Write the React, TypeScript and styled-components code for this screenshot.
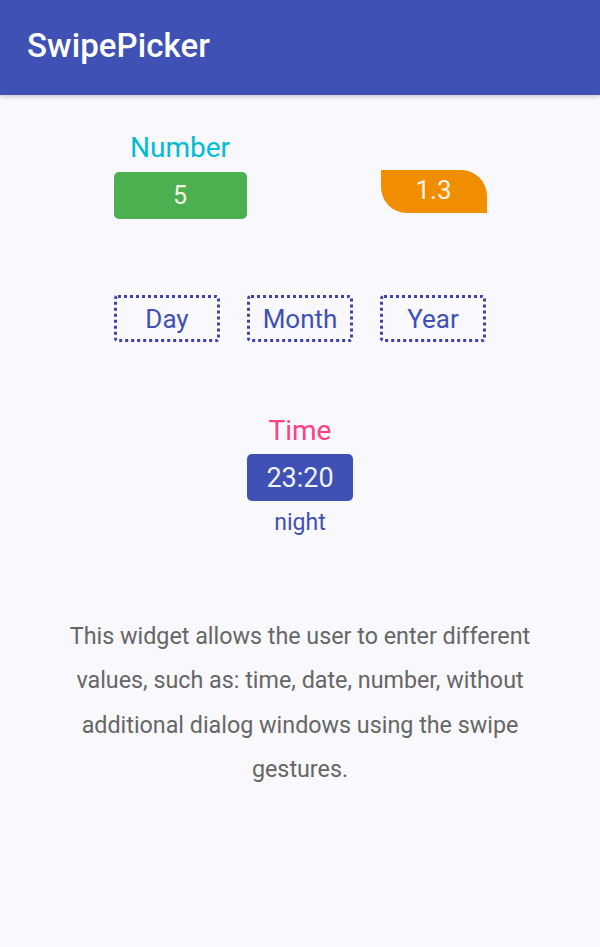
import React from "react";
import styled, { createGlobalStyle } from "styled-components";

const Global = createGlobalStyle`
  html, body { margin: 0; padding: 0; background: #f9f8fd; }
  body { font-family: Roboto, "Noto Sans", sans-serif; }
`;

const Page = styled.div`
  width: 600px;
  min-height: 947px;
  background: #f9f8fd;
  display: flex;
  flex-direction: column;
`;

const AppBar = styled.header`
  height: 95px;
  background: #3f51b5;
  display: flex;
  align-items: center;
  padding: 0 0 4px 27px;
  box-sizing: border-box;
  box-shadow: 0 2px 4px rgba(0, 0, 0, 0.18);
`;

const Title = styled.h1`
  margin: 0;
  color: #fff;
  font-size: 33px;
  font-weight: 500;
  letter-spacing: 0.1px;
`;

const Content = styled.main`
  display: flex;
  flex-direction: column;
  align-items: center;
`;

const TopRow = styled.div`
  width: 373px;
  margin-top: 38px;
  display: flex;
  justify-content: space-between;
  align-items: flex-start;
`;

const Field = styled.div`
  display: flex;
  flex-direction: column;
  align-items: center;
`;

const Label = styled.div<{ $color: string }>`
  color: ${(p) => p.$color};
  font-size: 28px;
  line-height: 30px;
  margin-bottom: 9px;
`;

const GreenBox = styled.div`
  width: 133px;
  height: 47px;
  background: #4caf50;
  border-radius: 5px;
  color: #f4f4e8;
  font-size: 25px;
  display: flex;
  align-items: center;
  justify-content: center;
`;

const OrangeBox = styled.div`
  width: 106px;
  height: 43px;
  margin-top: 37px;
  background: #f08e00;
  border-radius: 0 26px 0 26px;
  color: #fbf2e4;
  font-size: 26px;
  display: flex;
  align-items: center;
  justify-content: center;
  padding-bottom: 4px;
  box-sizing: border-box;
`;

const DateRow = styled.div`
  margin-top: 76px;
  display: flex;
  gap: 27px;
`;

const DottedBox = styled.div`
  width: 106px;
  height: 47px;
  box-sizing: border-box;
  border: 3px dotted #3f42a8;
  border-radius: 4px;
  color: #3f51b5;
  font-size: 26px;
  display: flex;
  align-items: center;
  justify-content: center;
`;

const TimeField = styled(Field)`
  margin-top: 74px;
`;

const TimeBox = styled.div`
  width: 106px;
  height: 47px;
  background: #3f51b5;
  border-radius: 5px;
  color: #f0f0f8;
  font-size: 27px;
  display: flex;
  align-items: center;
  justify-content: center;
  margin-top: -1px;
`;

const Sub = styled.div`
  color: #3f51b5;
  font-size: 23px;
  margin-top: 8px;
`;

const Description = styled.p`
  margin: 78px 0 0;
  width: 490px;
  text-align: center;
  color: #666;
  font-size: 23.3px;
  line-height: 44.4px;
`;

export default function App() {
  return (
    <Page>
      <Global />
      <AppBar>
        <Title>SwipePicker</Title>
      </AppBar>
      <Content>
        <TopRow>
          <Field>
            <Label $color="#00bcd4">Number</Label>
            <GreenBox>5</GreenBox>
          </Field>
          <OrangeBox>1.3</OrangeBox>
        </TopRow>
        <DateRow>
          <DottedBox>Day</DottedBox>
          <DottedBox>Month</DottedBox>
          <DottedBox>Year</DottedBox>
        </DateRow>
        <TimeField>
          <Label $color="#ff4081">Time</Label>
          <TimeBox>23:20</TimeBox>
          <Sub>night</Sub>
        </TimeField>
        <Description>
          This widget allows the user to enter different values, such as: time, date, number, without additional dialog windows using the swipe gestures.
        </Description>
      </Content>
    </Page>
  );
}
